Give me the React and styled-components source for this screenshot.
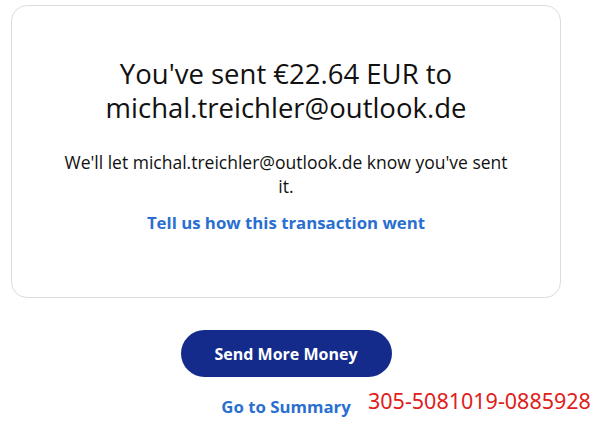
import React from 'react';
import styled, { createGlobalStyle } from 'styled-components';

const GlobalStyle = createGlobalStyle`
  html, body {
    margin: 0;
    padding: 0;
    background: #fff;
  }
  body {
    font-family: "Open Sans", "Noto Sans", sans-serif;
    color: #1b1b1b;
  }
`;

const Page = styled.div`
  width: 608px;
  height: 421px;
  position: relative;
  overflow: hidden;
  padding: 5px 0 0 11px;
  box-sizing: border-box;
`;

const Card = styled.div`
  width: 550px;
  height: 293px;
  box-sizing: border-box;
  border: 1px solid #dcdcdc;
  border-radius: 16px;
  padding: 51px 40px 0;
  display: flex;
  flex-direction: column;
  align-items: center;
  text-align: center;
`;

const Heading = styled.h1`
  margin: 0;
  font-size: 27.5px;
  line-height: 34px;
  font-weight: 400;
  color: #111;
`;

const Note = styled.p`
  margin: 25px 0 0;
  font-size: 17.5px;
  line-height: 24px;
  max-width: 455px;
  color: #111;
`;

const Link = styled.a`
  display: inline-block;
  font-size: 16.8px;
  font-weight: 700;
  color: ${(p) => p.color || '#2a6fd0'};
  text-decoration: none;
  cursor: pointer;
`;

const Feedback = styled(Link)`
  margin-top: 13px;
`;

const Actions = styled.div`
  width: 550px;
  display: flex;
  flex-direction: column;
  align-items: center;
  margin-top: 32px;
`;

const PrimaryButton = styled.button`
  width: 211px;
  height: 47px;
  border: none;
  border-radius: 24px;
  background: #142b8c;
  color: #fff;
  font-family: "Open Sans", "Noto Sans", sans-serif;
  font-size: 16px;
  font-weight: 700;
  cursor: pointer;
`;

const Summary = styled(Link)`
  margin-top: 18px;
`;

const Stamp = styled.span`
  position: absolute;
  left: 368px;
  top: 386px;
  font-family: "Noto Sans", sans-serif;
  font-size: 21.5px;
  color: #e0201b;
`;

export default function App() {
  return (
    <>
      <GlobalStyle />
      <Page>
        <Card>
          <Heading>
            You've sent €22.64 EUR to
            <br />
            michal.treichler@outlook.de
          </Heading>
          <Note>We'll let michal.treichler@outlook.de know you've sent it.</Note>
          <Feedback>Tell us how this transaction went</Feedback>
        </Card>
        <Actions>
          <PrimaryButton>Send More Money</PrimaryButton>
          <Summary>Go to Summary</Summary>
        </Actions>
        <Stamp>305-5081019-0885928</Stamp>
      </Page>
    </>
  );
}
